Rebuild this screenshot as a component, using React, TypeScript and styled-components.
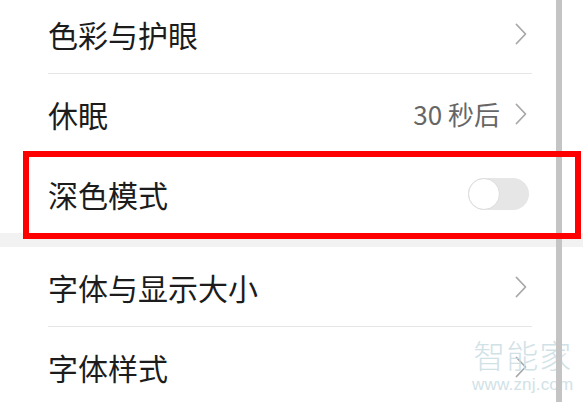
import React, {FC} from 'react';
import styled, {createGlobalStyle} from 'styled-components';

const GlobalStyle = createGlobalStyle`
  html, body {
    margin: 0;
    padding: 0;
    background: #ffffff;
    overflow: hidden;
  }
  body {
    font-family: "Noto Sans CJK SC", "Noto Sans", sans-serif;
  }
`

const Screen = styled.div`
  position: relative;
  width: 583px;
  height: 402px;
  overflow: hidden;
  background: #ffffff;
`

const List = styled.div`
  display: flex;
  flex-direction: column;
  margin-top: -6px;
`

interface RowProps {
    height?: number
}
const Row = styled.div<RowProps>`
  display: flex;
  align-items: center;
  justify-content: space-between;
  height: ${({height}) => height || 79}px;
  padding: 0 56px 0 48px;
  flex-shrink: 0;
`

const Title = styled.span`
  font-size: 30px;
  line-height: 1;
  color: #1c1c1c;
  letter-spacing: 0;
`

const Trailing = styled.div`
  display: flex;
  align-items: center;
  gap: 15px;
`

const Value = styled.span`
  font-size: 26px;
  line-height: 1;
  color: #666666;
`

const Divider = styled.div`
  height: 1px;
  margin: 0 51px 0 48px;
  background: #e6e6e6;
  flex-shrink: 0;
`

const SectionGap = styled.div`
  height: 14px;
  background: #f2f2f2;
  flex-shrink: 0;
`

const Track = styled.div`
  display: flex;
  align-items: center;
  width: 61px;
  height: 32px;
  border-radius: 16px;
  background: #e6e6e6;
  margin-right: -2px;
`

const Knob = styled.div`
  width: 32px;
  height: 32px;
  box-sizing: border-box;
  border-radius: 50%;
  background: #ffffff;
  border: 1.5px solid #dcdcdc;
`

const EdgeBar = styled.div`
  position: absolute;
  top: 0;
  bottom: 0;
  left: 556px;
  width: 6px;
  background: #c4c4c4;
`

const Highlight = styled.div`
  position: absolute;
  left: 23px;
  top: 151px;
  width: 558px;
  height: 88px;
  box-sizing: border-box;
  border: 6px solid #ff0000;
`

const Watermark = styled.div`
  position: absolute;
  left: 472px;
  top: 338px;
  display: flex;
  flex-direction: column;
  align-items: center;
  color: #cadde3;
  opacity: 0.85;
  line-height: 1;
`

const MarkTitle = styled.span`
  font-size: 32px;
  letter-spacing: 1px;
  font-weight: 300;
`

const MarkUrl = styled.span`
  font-family: "Liberation Sans", Arial, sans-serif;
  font-size: 17px;
  margin-top: 6px;
  letter-spacing: 0.2px;
`

const Chevron: FC = () => (
    <svg width="12" height="22" viewBox="0 0 12 22" fill="none">
        <polyline points="1.5,1.5 10.5,11 1.5,20.5" stroke="#a8a8a8" strokeWidth="1.8"
                  strokeLinecap="round" strokeLinejoin="round"/>
    </svg>
)

const Toggle: FC = () => (
    <Track>
        <Knob/>
    </Track>
)

const App: FC = () => {
    return (
        <Screen>
            <GlobalStyle/>
            <List>
                <Row>
                    <Title>色彩与护眼</Title>
                    <Chevron/>
                </Row>
                <Divider/>
                <Row>
                    <Title>休眠</Title>
                    <Trailing>
                        <Value>30 秒后</Value>
                        <Chevron/>
                    </Trailing>
                </Row>
                <Divider/>
                <Row>
                    <Title>深色模式</Title>
                    <Toggle/>
                </Row>
                <SectionGap/>
                <Row>
                    <Title>字体与显示大小</Title>
                    <Chevron/>
                </Row>
                <Divider/>
                <Row>
                    <Title>字体样式</Title>
                    <Chevron/>
                </Row>
            </List>
            <Watermark>
                <MarkTitle>智能家</MarkTitle>
                <MarkUrl>www.znj.com</MarkUrl>
            </Watermark>
            <EdgeBar/>
            <Highlight/>
        </Screen>
    );
};

export default App;
